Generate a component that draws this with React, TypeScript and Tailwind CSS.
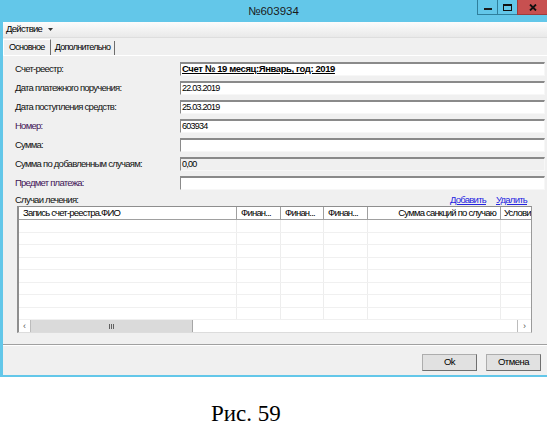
import React from "react";

const rows = [
  { label: "Счет-реестр:", value: "Счет № 19 месяц:Январь, год: 2019", strong: true },
  { label: "Дата платежного поручения:", value: "22.03.2019" },
  { label: "Дата поступления средств:", value: "25.03.2019" },
  { label: "Номер:", value: "603934", tone: "purple" },
  { label: "Сумма:", value: "" },
  { label: "Сумма по добавленным случаям:", value: "0,00", readOnly: true },
  { label: "Предмет платежа:", value: "", tone: "purple" },
];

const cols = "grid grid-cols-[218px_44px_43px_44px_133px_1fr]";

function TitleBar() {
  return (
    <div className="grid grid-cols-[1fr_auto_1fr] h-[22px]">
      <div />
      <div className="flex items-center text-[11.5px] text-[#1a1a1a] pt-[1px]">№603934</div>
      <div className="flex justify-end items-start">
        <div className="w-[20px] h-[15px] border-l border-b border-[#2f7f9c] flex items-end justify-center pb-[4px]">
          <div className="w-[8px] h-[2px] bg-[#1b1b1b]" />
        </div>
        <div className="w-[20px] h-[15px] border-l border-b border-[#2f7f9c] flex items-center justify-center">
          <div className="w-[9px] h-[7px] border border-t-2 border-[#111]" />
        </div>
        <div className="w-[30px] h-[15px] bg-[#c75050] border-l border-b border-[#9e3c3c] flex items-center justify-center">
          <svg width="8" height="7" viewBox="0 0 8 7">
            <path d="M1 0.5 L7 6.5 M7 0.5 L1 6.5" stroke="#111" strokeWidth="1.8" />
          </svg>
        </div>
      </div>
    </div>
  );
}

function Field({ row }: { row: (typeof rows)[number] }) {
  return (
    <div className="flex h-[14px] items-center mb-[5px]">
      <div
        className={
          "w-[177px] pl-[12px] text-[9.5px] tracking-[-0.75px] whitespace-nowrap " +
          (row.tone === "purple" ? "text-[#3f1456]" : "text-[#111]")
        }
      >
        {row.label}
      </div>
      <div
        className={
          "flex-1 mr-[2px] h-[14px] flex items-center pl-[1px] border-t-2 border-l border-t-[#8a8a8a] border-l-[#8a8a8a] border-b border-r border-b-[#f7f7f7] border-r-[#f7f7f7] " +
          (row.readOnly ? "bg-[#f0f0f0]" : "bg-white")
        }
      >
        {row.strong ? (
          <span className="text-[9.5px] font-bold underline tracking-[-0.4px] whitespace-nowrap">{row.value}</span>
        ) : (
          <span className="text-[9px] tracking-[-0.75px] whitespace-nowrap">{row.value}</span>
        )}
      </div>
    </div>
  );
}

function CasesTable() {
  const head = ["Запись счет-реестра.ФИО", "Финан...", "Финан...", "Финан..."];
  return (
    <div className="ml-[14px] w-[515px] border-l-2 border-t border-l-[#8e8e8e] border-t-[#8e8e8e] border-r border-b border-r-[#9a9a9a] border-b-[#dcdcdc] bg-white">
      <div className={cols + " h-[13px] border-b border-[#a0a0a0] text-[9.5px] tracking-[-0.8px]"}>
        {head.map((h, i) => (
          <div key={i} className="border-r border-[#a0a0a0] pl-[4px] flex items-center whitespace-nowrap overflow-hidden">
            {h}
          </div>
        ))}
        <div className="border-r border-[#a0a0a0] pr-[4px] flex items-center justify-end whitespace-nowrap overflow-hidden">
          Сумма санкций по случаю
        </div>
        <div className="pl-[3px] flex items-center whitespace-nowrap overflow-hidden">Услови</div>
      </div>
      {Array.from({ length: 8 }).map((_, r) => (
        <div key={r} className={cols + " h-[12.5px] border-b border-[#f0f0f0]"}>
          {Array.from({ length: 5 }).map((_, c) => (
            <div key={c} className="border-r border-[#ededed]" />
          ))}
          <div />
        </div>
      ))}
      <div className="h-[12px] flex bg-white">
        <div className="w-[12px] border-r border-[#bcbcbc] flex items-center justify-center text-[9px] leading-none text-[#555]">‹</div>
        <div className="w-[162px] bg-[#dadada] border-r border-[#a6a6a6] flex items-center justify-center">
          <div className="flex gap-[1px]">
            <div className="w-[1px] h-[5px] bg-[#606060]" />
            <div className="w-[1px] h-[5px] bg-[#606060]" />
            <div className="w-[1px] h-[5px] bg-[#606060]" />
          </div>
        </div>
        <div className="flex-1" />
        <div className="w-[14px] border-l border-[#bcbcbc] flex items-center justify-center text-[9px] leading-none text-[#555]">›</div>
      </div>
    </div>
  );
}

export default function App() {
  return (
    <div className="w-[547px] h-[431px] bg-white overflow-hidden flex flex-col font-['Liberation_Sans',Arial,sans-serif] text-black">
      <div className="h-[377px] bg-[#63c7e9] flex flex-col pb-[2px]">
        <TitleBar />
        <div className="ml-[3px] flex-1 flex flex-col bg-[#f0f0f0]">
          <div className="h-[16px] bg-gradient-to-b from-[#fcfcfc] to-[#e9e9e9] border-b border-[#dedede] flex items-center pl-[3px] text-[9.5px] tracking-[-0.7px]">
            <span>Действие</span>
            <svg className="ml-[6px]" width="5" height="3" viewBox="0 0 5 3">
              <path d="M0 0 H5 L2.5 3 Z" fill="#333" />
            </svg>
          </div>
          <div className="h-[17px] flex items-end text-[9px] tracking-[-0.7px]">
            <div className="h-[16px] px-[5px] border-l border-t border-white border-r border-r-[#6d6d6d] flex items-center">
              Основное
            </div>
            <div className="h-[14px] px-[4px] border-r border-[#6d6d6d] flex items-center">
              Дополнительно
            </div>
          </div>
          <div className="h-[282px] border-t border-white pt-[6px]">
            {rows.map((row, i) => (
              <Field key={i} row={row} />
            ))}
            <div className="h-[11px] flex items-center text-[9.5px] tracking-[-0.75px]">
              <span className="pl-[12px] text-[#111]">Случаи лечения:</span>
              <span className="ml-auto text-[#2424e0] underline">Добавить</span>
              <span className="ml-[10px] mr-[20px] text-[#2424e0] underline">Удалить</span>
            </div>
            <CasesTable />
          </div>
          <div className="h-[7px]" />
          <div className="h-[2px] border-t border-[#a0a0a0] border-b border-b-white" />
          <div className="flex-1 flex justify-end items-start pt-[8px] pr-[6px] gap-[9px] text-[9.5px] tracking-[-0.5px]">
            <div className="w-[55px] h-[17px] bg-[#e1e1e1] border border-[#adadad] border-r-[#6f6f6f] border-b-[#6f6f6f] flex items-center justify-center">
              Ok
            </div>
            <div className="w-[55px] h-[17px] bg-[#e1e1e1] border border-[#adadad] border-r-[#6f6f6f] border-b-[#6f6f6f] flex items-center justify-center">
              Отмена
            </div>
          </div>
        </div>
      </div>
      <p className="flex-1 pt-[25px] pl-[211px] font-['Liberation_Serif','Times_New_Roman',serif] text-[23px] leading-none">
        Рис. 59
      </p>
    </div>
  );
}
